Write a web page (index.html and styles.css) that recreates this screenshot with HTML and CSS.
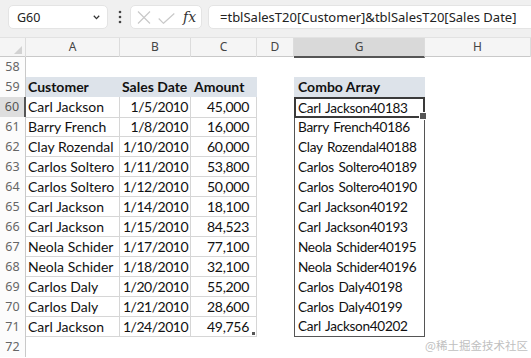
FILE: index.html
```html
<!DOCTYPE html>
<html lang="en">
<head>
    <meta charset="UTF-8">
    <title>Combo Array</title>
    <link rel="stylesheet" href="styles.css">
</head>
<body>
<div class="toolbar">
    <div class="namebox">
        <span>G60</span>
        <svg class="chev" width="7" height="5" viewBox="0 0 7 5"><path d="M0.8 0.8 L3.5 3.6 L6.2 0.8" fill="none" stroke="#333" stroke-width="1.3"/></svg>
    </div>
    <svg class="dots" width="4" height="14" viewBox="0 0 4 14"><circle cx="2" cy="2" r="1.3" fill="#444"/><circle cx="2" cy="7" r="1.3" fill="#444"/><circle cx="2" cy="12" r="1.3" fill="#444"/></svg>
    <div class="fxbox">
        <svg width="14" height="13" viewBox="0 0 14 13"><path d="M1 0.5 L13 12.5 M13 0.5 L1 12.5" stroke="#c9c9c9" stroke-width="1.2"/></svg>
        <svg class="check" width="17" height="11" viewBox="0 0 17 11"><path d="M0.7 5.5 L5.5 10.3 L16.3 0.5" fill="none" stroke="#c9c9c9" stroke-width="1.2"/></svg>
        <span class="fx">fx</span>
    </div>
    <div class="formula">=tblSalesT20[Customer]&amp;tblSalesT20[Sales Date]</div>
</div>

<div class="sheet">
    <div class="row head">
        <div class="corner"><svg width="8" height="8" viewBox="0 0 8 8"><path d="M8 0 L8 8 L0 8 Z" fill="#d2d2d2"/></svg></div>
        <div class="col">A</div><div class="col">B</div><div class="col">C</div><div class="col">D</div><div class="col sel">G</div><div class="col">H</div>
    </div>
    <div class="row"><div class="rh">58</div><div></div><div></div><div></div><div></div><div></div><div></div></div>
    <div class="row">
        <div class="rh">59</div>
        <div class="th">Customer</div><div class="th">Sales Date</div><div class="th last">Amount</div>
        <div></div><div class="th combo">Combo Array</div><div></div>
    </div>
    <div class="row">
        <div class="rh on">60</div>
        <div class="td">Carl Jackson</div><div class="td num">1/5/2010</div><div class="td num amt">45,000</div>
        <div></div><div class="spill first active">Carl Jackson40183</div><div></div>
    </div>
    <div class="row">
        <div class="rh">61</div>
        <div class="td">Barry French</div><div class="td num">1/8/2010</div><div class="td num amt">16,000</div>
        <div></div><div class="spill">Barry French40186</div><div></div>
    </div>
    <div class="row">
        <div class="rh">62</div>
        <div class="td">Clay Rozendal</div><div class="td num">1/10/2010</div><div class="td num amt">60,000</div>
        <div></div><div class="spill">Clay Rozendal40188</div><div></div>
    </div>
    <div class="row">
        <div class="rh">63</div>
        <div class="td">Carlos Soltero</div><div class="td num">1/11/2010</div><div class="td num amt">53,800</div>
        <div></div><div class="spill">Carlos Soltero40189</div><div></div>
    </div>
    <div class="row">
        <div class="rh">64</div>
        <div class="td">Carlos Soltero</div><div class="td num">1/12/2010</div><div class="td num amt">50,000</div>
        <div></div><div class="spill">Carlos Soltero40190</div><div></div>
    </div>
    <div class="row">
        <div class="rh">65</div>
        <div class="td">Carl Jackson</div><div class="td num">1/14/2010</div><div class="td num amt">18,100</div>
        <div></div><div class="spill">Carl Jackson40192</div><div></div>
    </div>
    <div class="row">
        <div class="rh">66</div>
        <div class="td">Carl Jackson</div><div class="td num">1/15/2010</div><div class="td num amt">84,523</div>
        <div></div><div class="spill">Carl Jackson40193</div><div></div>
    </div>
    <div class="row">
        <div class="rh">67</div>
        <div class="td">Neola Schider</div><div class="td num">1/17/2010</div><div class="td num amt">77,100</div>
        <div></div><div class="spill">Neola Schider40195</div><div></div>
    </div>
    <div class="row">
        <div class="rh">68</div>
        <div class="td">Neola Schider</div><div class="td num">1/18/2010</div><div class="td num amt">32,100</div>
        <div></div><div class="spill">Neola Schider40196</div><div></div>
    </div>
    <div class="row">
        <div class="rh">69</div>
        <div class="td">Carlos Daly</div><div class="td num">1/20/2010</div><div class="td num amt">55,200</div>
        <div></div><div class="spill">Carlos Daly40198</div><div></div>
    </div>
    <div class="row">
        <div class="rh">70</div>
        <div class="td">Carlos Daly</div><div class="td num">1/21/2010</div><div class="td num amt">28,600</div>
        <div></div><div class="spill">Carlos Daly40199</div><div></div>
    </div>
    <div class="row">
        <div class="rh">71</div>
        <div class="td">Carl Jackson</div><div class="td num">1/24/2010</div><div class="td num amt resize">49,756</div>
        <div></div><div class="spill end">Carl Jackson40202</div><div></div>
    </div>
    <div class="row"><div class="rh">72</div><div></div><div></div><div></div><div></div><div></div><div></div></div>
    <div class="mark">@稀土掘金技术社区</div>
</div>
</body>
</html>
```

FILE: styles.css
```css
* {
    margin: 0;
    padding: 0;
    box-sizing: border-box;
}

body {
    width: 531px;
    height: 358px;
    overflow: hidden;
    background: #fff;
    font-family: Lato, "Liberation Sans", sans-serif;
    color: #111;
}

/* formula bar */
.toolbar {
    height: 38px;
    display: flex;
    align-items: flex-start;
    padding: 5px 0 0 8px;
    background: #f0f0f0;
    border-bottom: 1px solid #e2e2e2;
    font-family: "Noto Sans", "Open Sans", sans-serif;
    overflow: hidden;
}

.namebox {
    width: 100px;
    height: 24px;
    flex: none;
    display: flex;
    align-items: center;
    justify-content: space-between;
    padding: 0 7px 0 8px;
    background: #fff;
    border: 1px solid #e4e4e4;
    border-radius: 5px;
    font-size: 12.5px;
    color: #222;
}

.dots {
    flex: none;
    margin: 5px 0 0 10px;
}

.fxbox {
    width: 72px;
    height: 24px;
    flex: none;
    margin-left: 8px;
    display: flex;
    align-items: center;
    gap: 7px;
    padding-left: 6px;
    background: #fff;
    border: 1px solid #e4e4e4;
    border-radius: 5px;
}

.fxbox .check {
    margin-top: 2px;
}

.fx {
    font-family: "DejaVu Serif", "Liberation Serif", serif;
    font-style: italic;
    font-size: 14px;
    color: #333;
    margin-left: 1px;
}

.formula {
    flex: none;
    width: 340px;
    height: 24px;
    margin-left: 6px;
    padding-left: 11px;
    line-height: 22px;
    background: #fff;
    border: 1px solid #e4e4e4;
    border-radius: 5px;
    font-size: 13px;
    color: #222;
    white-space: nowrap;
}

/* grid */
.sheet {
    position: relative;
}

.row {
    display: grid;
    grid-template-columns: 26px 94px 71px 66px 37px 131px 106px;
    height: 20px;
}

.row.head {
    height: 19px;
    background: #f5f5f5;
    border-bottom: 1px solid #c9c9c9;
    font-family: "Noto Sans", "Open Sans", sans-serif;
    font-size: 12px;
    color: #444;
}

.corner {
    display: flex;
    align-items: flex-end;
    justify-content: flex-end;
    padding: 0 3px 3px 0;
    border-right: 1px solid #dcdcdc;
}

.col {
    text-align: center;
    line-height: 18px;
    border-right: 1px solid #dcdcdc;
}

.col.sel {
    background: #d9d9d9;
    border-bottom: 2px solid #555;
    margin-bottom: -1px;
}

.rh {
    background: #fcfcfc;
    border-right: 1px solid #c9c9c9;
    text-align: center;
    line-height: 20px;
    font-family: "Noto Sans", "Open Sans", sans-serif;
    font-size: 12.5px;
    color: #666;
}

.rh.on {
    background: #dedede;
    border-right: 2px solid #555;
    color: #555;
}

/* table range */
.th, .td, .spill {
    font-size: 14px;
    line-height: 19px;
    padding-left: 2px;
    white-space: nowrap;
    overflow: hidden;
}

.th {
    background: #dde3ea;
    font-weight: bold;
    line-height: 20px;
    color: #111;
}

.th.last {
    padding-left: 3px;
}

.th.combo {
    padding-left: 4px;
}

.td {
    border-right: 1px solid #d6d6d6;
    border-bottom: 1px solid #d6d6d6;
}

.td.num {
    text-align: right;
    padding-right: 2px;
    letter-spacing: -0.5px;
}

.td.amt {
    padding-right: 7px;
    letter-spacing: -0.3px;
}

.resize {
    position: relative;
}

.resize::after {
    content: "";
    position: absolute;
    right: 1px;
    bottom: 1px;
    width: 3px;
    height: 3px;
    background: #555;
}

.spill {
    padding-left: 3px;
    border-left: 1px solid #555;
    border-right: 1px solid #555;
    line-height: 20px;
    font-size: 13.6px;
    letter-spacing: -0.3px;
    word-spacing: 1.5px;
}

.spill.first {
    border-top: 1px solid #555;
    line-height: 19px;
}

.spill.end {
    border-bottom: 1px solid #555;
    line-height: 19px;
}

.spill.active {
    position: relative;
    overflow: visible;
    border: 2px solid #3a3a3a;
    padding-left: 2px;
    line-height: 16px;
    padding-top: 1px;
}

.spill.active::after {
    content: "";
    position: absolute;
    right: -4px;
    bottom: -4px;
    width: 6px;
    height: 6px;
    background: #555;
    border: 1px solid #fff;
}

.mark {
    position: absolute;
    right: 3px;
    bottom: 4px;
    font-family: "Noto Sans CJK SC", sans-serif;
    font-size: 11.5px;
    color: #c0c0c0;
}
```
